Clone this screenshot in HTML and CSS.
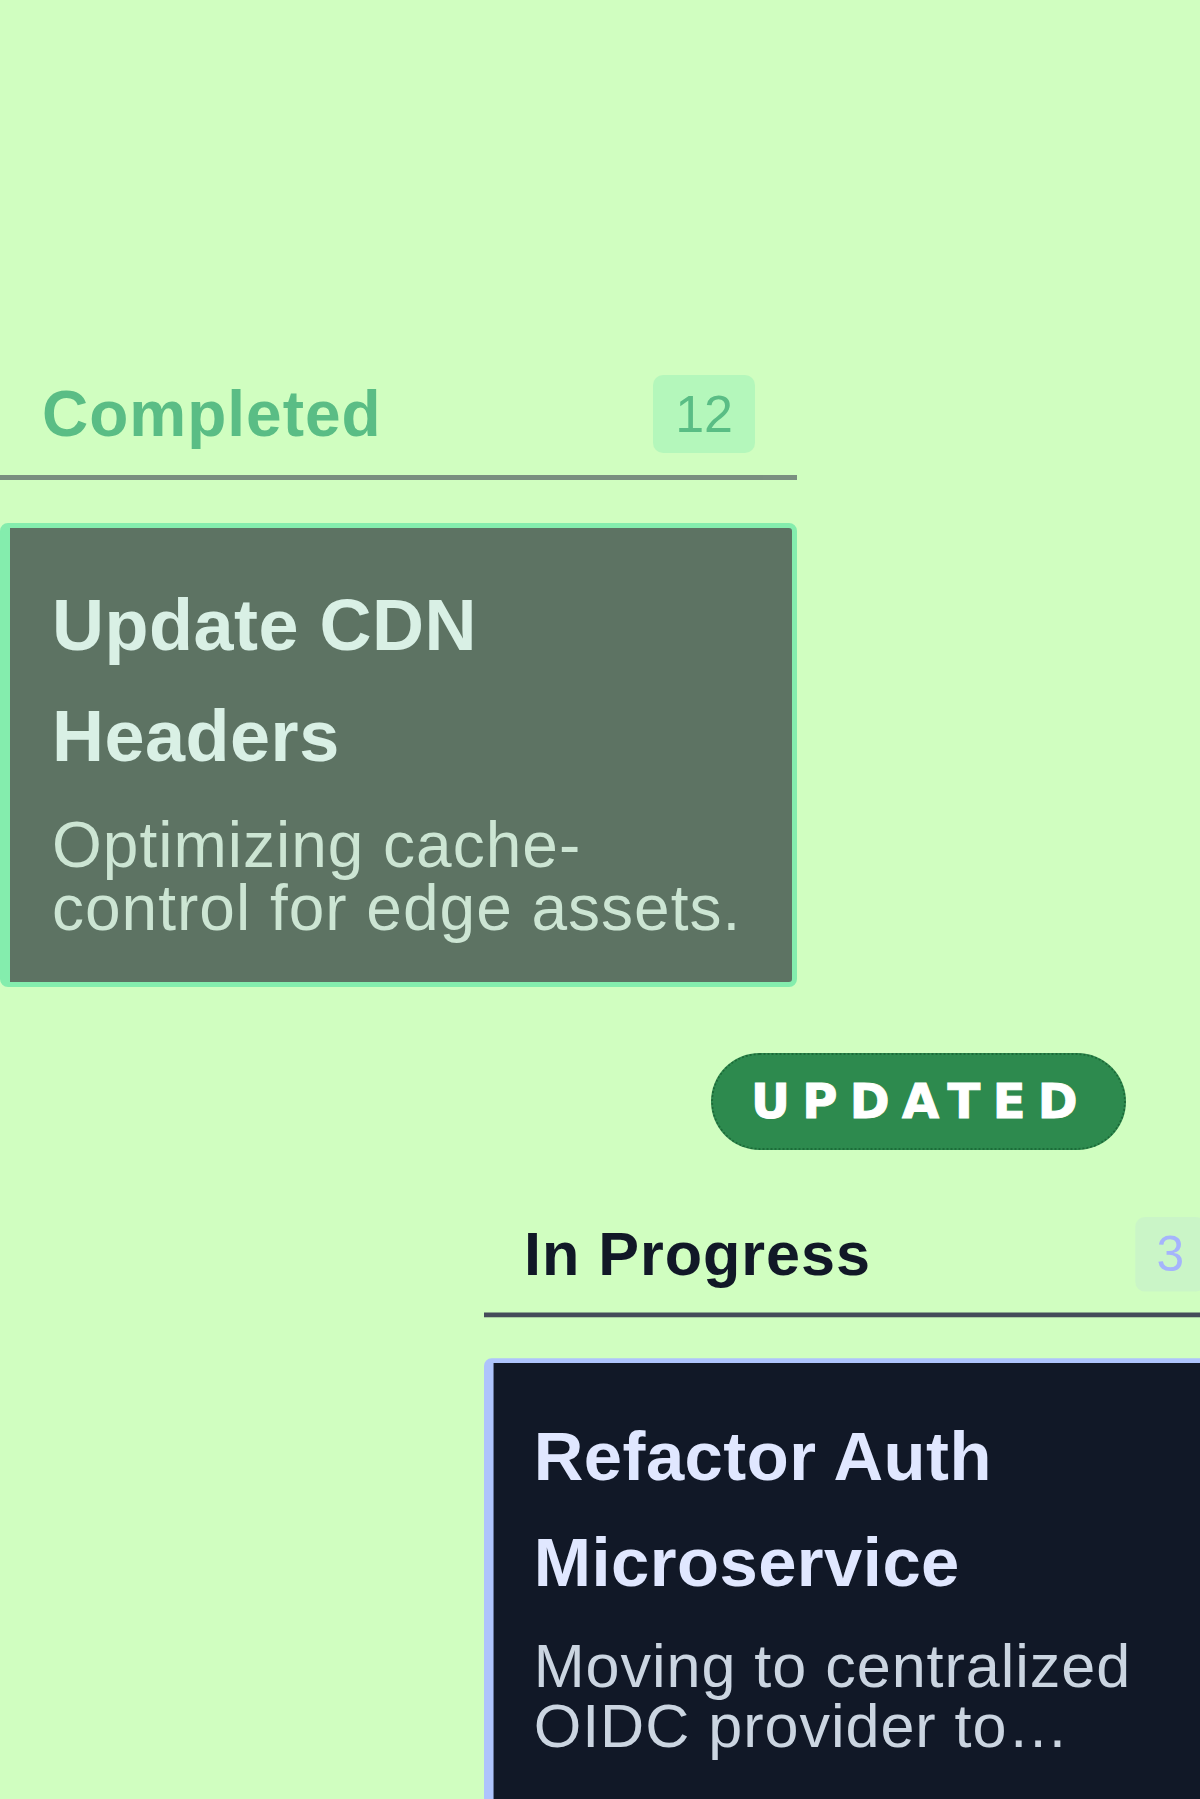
FILE: index.html
```html
<!DOCTYPE html>
<html lang="en">
<head>
    <meta charset="UTF-8">
    <meta name="viewport" content="width=device-width, initial-scale=1.0">
    <title>Board</title>
    <link rel="stylesheet" href="styles.css">
</head>
<body>

    <div class="board">

        <!-- Completed column (dimmed) -->
        <section class="column column-done">
            <header class="column-head">
                <h2 class="column-title">Completed</h2>
                <span class="column-count">12</span>
            </header>
            <article class="card">
                <h3 class="card-title">Update CDN Headers</h3>
                <p class="card-desc">Optimizing cache-control for edge assets.</p>
            </article>
        </section>

        <span class="status-pill">Updated</span>

        <!-- In progress column -->
        <section class="column column-progress">
            <header class="column-head">
                <h2 class="column-title">In Progress</h2>
                <span class="column-count">3</span>
            </header>
            <article class="card">
                <h3 class="card-title">Refactor Auth Microservice</h3>
                <p class="card-desc">Moving to centralized OIDC provider to improve session security across services.</p>
            </article>
        </section>

    </div>

</body>
</html>
```

FILE: styles.css
```css
html, body {
    margin: 0;
    overflow: hidden;
}

body {
    background-color: #d0fec0;
    font-family: "Liberation Sans", Arial, sans-serif;
}

.board {
    display: flex;
    flex-direction: column;
    align-items: flex-start;
    gap: 66px;
    padding-top: 375px;
}

.column {
    width: 797px;
    flex-shrink: 0;
}

.column-head {
    display: flex;
    align-items: center;
    justify-content: space-between;
    padding: 0 42px 22px;
    border-bottom: 5px solid #454c5a;
}

.column-title {
    margin: 0;
    font-size: 64px;
    font-weight: 700;
    letter-spacing: 1px;
    color: #111827;
}

.column-count {
    font-size: 52px;
    line-height: 60px;
    padding: 9px 22px;
    border-radius: 10px;
    color: #a5b4fc;
    background-color: rgba(165, 180, 252, 0.12);
}

.card {
    margin-top: 43px;
    padding: 42px 42px 38px;
    background-color: #111827;
    border: 5px solid #aec4fc;
    border-left-width: 10px;
    border-radius: 8px;
}

.card-title {
    margin: 0 0 22px;
    font-size: 72px;
    line-height: 111px;
    font-weight: 700;
    letter-spacing: 0.5px;
    color: #e0e7ff;
}

.card-desc {
    margin: 0;
    padding-bottom: 4px;
    font-size: 64px;
    line-height: 63px;
    letter-spacing: 1px;
    color: #cbd5e1;
    display: -webkit-box;
    -webkit-line-clamp: 2;
    -webkit-box-orient: vertical;
    overflow: hidden;
}

/* completed column is faded out */
.column-done {
    opacity: 0.6;
}

.column-done .column-head {
    border-bottom-color: #414555;
}

.column-done .column-title,
.column-done .column-count {
    color: #0c935e;
}

.column-done .column-count {
    background-color: #a3f4b9;
}

.column-done .card {
    border-color: #52e3a2;
}

/* in progress column sits a bit smaller */
.column-progress {
    margin-top: 1px;
    margin-left: 484px;
    transform: scale(0.955);
    transform-origin: top left;
}

.column-progress .card {
    padding-bottom: 64px;
}

.status-pill {
    margin-left: 711px;
    padding: 18px 34px 18px 38px;
    font-family: "DejaVu Sans", sans-serif;
    font-size: 48px;
    line-height: 57px;
    font-weight: 700;
    letter-spacing: 12.3px;
    text-transform: uppercase;
    color: #ffffff;
    -webkit-text-stroke: 1px #ffffff;
    background-color: #2d8a4e;
    border: 2px dotted #1c6b38;
    border-radius: 999px;
}
```
